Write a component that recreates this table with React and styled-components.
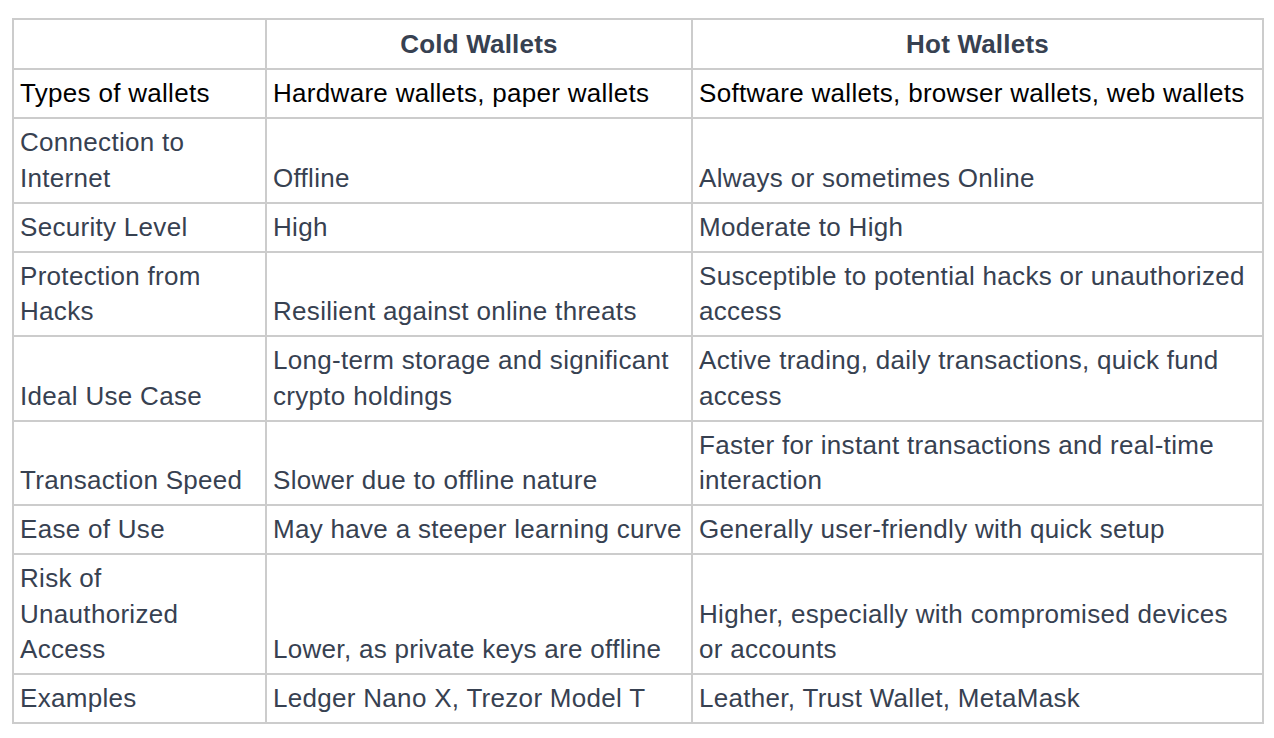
import React from "react";
import styled, { createGlobalStyle } from "styled-components";

const Global = createGlobalStyle`
  html, body { margin: 0; padding: 0; background: #fff; }
  body { font-family: "Liberation Sans", Arial, Helvetica, sans-serif; }
`;

const Page = styled.div`
  padding: 18px 12px;
`;

const Table = styled.table`
  width: 1250px;
  border-collapse: collapse;
  table-layout: fixed;
  font-family: "Liberation Sans", Arial, Helvetica, sans-serif;
  font-size: 26px;
  letter-spacing: 0.3px;
  line-height: 35.2px;
  color: #374151;
`;

const HeadCell = styled.th`
  border: 2px solid #cccccc;
  padding: 6.5px 6px;
  text-align: center;
  vertical-align: middle;
  font-weight: 700;
  letter-spacing: 0.2px;
  color: #374151;
`;

const Cell = styled.td`
  border: 2px solid #cccccc;
  padding: 6px 6px;
  text-align: left;
  vertical-align: bottom;
  font-weight: 400;
  color: ${(p) => (p.$dark ? "#000000" : "#374151")};
`;

const rows = [
  ["Types of wallets", "Hardware wallets, paper wallets", "Software wallets, browser wallets, web wallets", true],
  ["Connection to Internet", "Offline", "Always or sometimes Online"],
  ["Security Level", "High", "Moderate to High"],
  ["Protection from Hacks", "Resilient against online threats", "Susceptible to potential hacks or unauthorized access"],
  ["Ideal Use Case", "Long-term storage and significant crypto holdings", "Active trading, daily transactions, quick fund access"],
  ["Transaction Speed", "Slower due to offline nature", "Faster for instant transactions and real-time interaction"],
  ["Ease of Use", "May have a steeper learning curve", "Generally user-friendly with quick setup"],
  ["Risk of Unauthorized Access", "Lower, as private keys are offline", "Higher, especially with compromised devices or accounts"],
  ["Examples", "Ledger Nano X, Trezor Model T", "Leather, Trust Wallet, MetaMask"],
];

export default function App() {
  return (
    <>
      <Global />
      <Page>
        <Table>
          <colgroup>
            <col style={{ width: 253 }} />
            <col style={{ width: 426 }} />
            <col style={{ width: 571 }} />
          </colgroup>
          <thead>
            <tr>
              <HeadCell></HeadCell>
              <HeadCell>Cold Wallets</HeadCell>
              <HeadCell>Hot Wallets</HeadCell>
            </tr>
          </thead>
          <tbody>
            {rows.map(([a, b, c, dark]) => (
              <tr key={a}>
                <Cell $dark={dark}>{a}</Cell>
                <Cell $dark={dark}>{b}</Cell>
                <Cell $dark={dark}>{c}</Cell>
              </tr>
            ))}
          </tbody>
        </Table>
      </Page>
    </>
  );
}
